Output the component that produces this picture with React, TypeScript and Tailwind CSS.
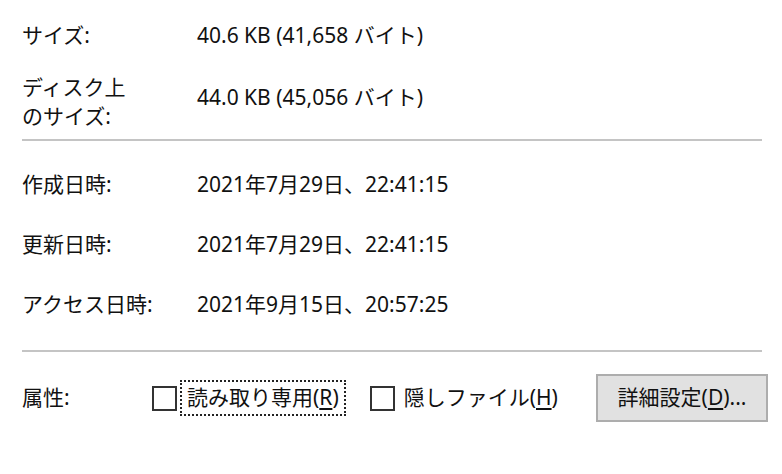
const font = { fontFamily: '"Noto Sans", "Noto Sans CJK JP", sans-serif' };

const rows = [
  { label: "作成日時:", value: "2021年7月29日、22:41:15" },
  { label: "更新日時:", value: "2021年7月29日、22:41:15" },
  { label: "アクセス日時:", value: "2021年9月15日、20:57:25" },
];

const Checkbox = () => (
  <span className="block w-[25px] h-[25px] border-2 border-[#333333] bg-white shrink-0" />
);

const App = () => {
  return (
    <div
      className="w-[782px] h-[474px] bg-white text-[#111111] text-[21px] pl-[22px] pr-[20px] overflow-hidden"
      style={font}
    >
      {/* size */}
      <div className="flex items-center h-[44px] mt-[14px]">
        <div className="w-[175px] shrink-0">サイズ:</div>
        <div>40.6 KB (41,658 バイト)</div>
      </div>

      {/* size on disk */}
      <div className="flex mt-[15px]">
        <div className="w-[175px] shrink-0 leading-[29px]">
          ディスク上
          <br />
          のサイズ:
        </div>
        <div className="leading-[29px] mt-[10px]">44.0 KB (45,056 バイト)</div>
      </div>

      <div className="h-[2px] bg-[#c4c4c4] mt-[8px]" />

      {/* dates */}
      <div className="pt-[14px]">
        {rows.map((r) => (
          <div key={r.label} className="flex items-center h-[60px]">
            <div className="w-[175px] shrink-0">{r.label}</div>
            <div>{r.value}</div>
          </div>
        ))}
      </div>

      <div className="h-[2px] bg-[#c4c4c4] mt-[15px]" />

      {/* attributes */}
      <div className="flex items-center h-[48px] mt-[22px]">
        <div className="w-[130px] shrink-0">属性:</div>
        <Checkbox />
        <span className="ml-[5px] px-[5px] h-[32px] flex items-center outline-2 outline-dotted outline-[#222222]">
          読み取り専用(<span className="underline underline-offset-[3px]">R</span>)
        </span>
        <span className="ml-[26px]">
          <Checkbox />
        </span>
        <span className="ml-[9px]">
          隠しファイル(<span className="underline underline-offset-[3px]">H</span>)
        </span>
        <button
          className="ml-auto mr-[-6px] w-[172px] h-[48px] bg-[#e1e1e1] border-2 border-[#adadad] text-[21px] text-[#111111]"
          style={font}
        >
          詳細設定(<span className="underline underline-offset-[3px]">D</span>)...
        </button>
      </div>
    </div>
  );
};

export default App;
